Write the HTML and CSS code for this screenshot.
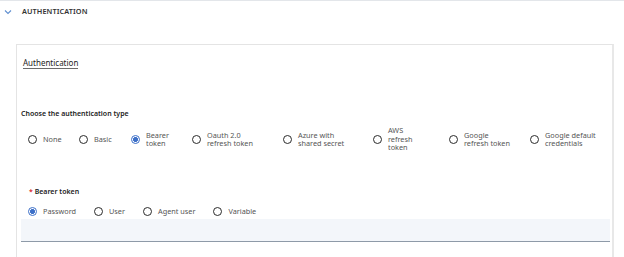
FILE: index.html
```html
<!DOCTYPE html>
<html lang="en">
<head>
    <meta charset="UTF-8">
    <title>Authentication</title>
    <link rel="stylesheet" href="styles.css">
</head>
<body>
    <div class="section-head">
        <svg class="chevron" width="8" height="6" viewBox="0 0 8 6">
            <path d="M1 1.5 L4 4.5 L7 1.5" fill="none" stroke="#5f8fd0" stroke-width="1.1"/>
        </svg>
        <span class="section-title">AUTHENTICATION</span>
    </div>

    <div class="card">
        <div class="card-title">Authentication</div>

        <div class="field-label type-label">Choose the authentication type</div>
        <div class="radio-grid">
            <label class="radio"><span class="dot"></span><span>None</span></label>
            <label class="radio"><span class="dot"></span><span>Basic</span></label>
            <label class="radio"><span class="dot checked"></span><span>Bearer<br>token</span></label>
            <label class="radio"><span class="dot"></span><span>Oauth 2.0<br>refresh token</span></label>
            <label class="radio"><span class="dot"></span><span>Azure with<br>shared secret</span></label>
            <label class="radio"><span class="dot"></span><span>AWS<br>refresh<br>token</span></label>
            <label class="radio"><span class="dot"></span><span>Google<br>refresh token</span></label>
            <label class="radio"><span class="dot"></span><span>Google default<br>credentials</span></label>
        </div>

        <div class="field-label token-label"><span class="star">*</span> Bearer token</div>
        <div class="radio-row">
            <label class="radio"><span class="dot checked"></span><span>Password</span></label>
            <label class="radio"><span class="dot"></span><span>User</span></label>
            <label class="radio"><span class="dot"></span><span>Agent user</span></label>
            <label class="radio"><span class="dot"></span><span>Variable</span></label>
        </div>
        <div class="input-box"></div>
    </div>
</body>
</html>
```

FILE: styles.css
```css
body {
    margin: 0;
    font-family: 'Noto Sans', 'Liberation Sans', sans-serif;
    background: #fff;
    color: #161616;
    overflow: hidden;
}
.section-head {
    display: flex;
    align-items: center;
    height: 19px;
    border-top: 1px solid #e3e6ea;
    padding-left: 4px;
}
.chevron {
    margin-right: 10px;
    margin-top: 2px;
}
.section-title {
    font-size: 7.3px;
    font-weight: 600;
    color: #333;
    letter-spacing: 0.1px;
}
.card {
    margin: 24px 0 0 16px;
    width: 598px;
    box-sizing: border-box;
    border: 1px solid #e4e4e4;
    border-right: 2px solid #e8e8e8;
    padding: 4px 2px 40px 4px;
}
.card-title {
    display: inline-block;
    margin-left: 2px;
    font-size: 8px;
    line-height: 10px;
    color: #1e1e1e;
    border-bottom: 1px solid #6b6b6b;
}
.field-label {
    font-size: 7px;
    font-weight: 600;
    line-height: 10px;
    color: #222;
}
.type-label {
    margin-top: 38px;
}
.radio-grid {
    display: grid;
    grid-template-columns: 51px 52px 61px 91px 90px 76px 81px auto;
    align-items: center;
    margin-top: 7px;
    padding-left: 7px;
    height: 26px;
}
.radio {
    display: flex;
    align-items: center;
    gap: 6px;
    font-size: 7.3px;
    line-height: 8.5px;
    color: #555;
}
.dot {
    flex: none;
    width: 9px;
    height: 9px;
    box-sizing: border-box;
    border: 1.3px solid #2b2b2b;
    border-radius: 50%;
}
.dot.checked {
    border-color: #3c6fc8;
    background: radial-gradient(circle, #3c6fc8 0 2.2px, #fff 2.6px);
}
.token-label {
    margin-top: 35px;
    padding-left: 8px;
}
.star {
    color: #da1e28;
}
.radio-row {
    display: flex;
    gap: 18px;
    margin-top: 10px;
    padding-left: 7px;
}
.input-box {
    margin-top: 3px;
    height: 22px;
    background: #f3f6fa;
    border-bottom: 1.5px solid #8e9aa8;
}
```
